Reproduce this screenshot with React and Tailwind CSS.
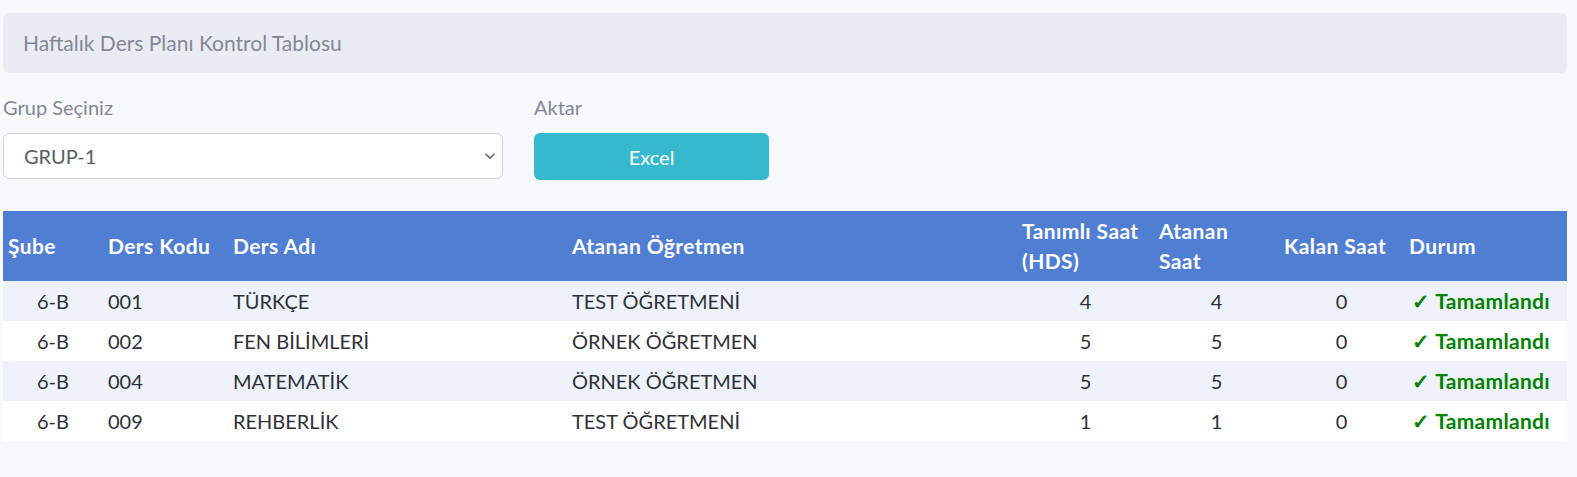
import React from 'react';

const rows = [
    { sube: '6-B', kod: '001', ad: 'TÜRKÇE', ogretmen: 'TEST ÖĞRETMENİ', tanimli: 4, atanan: 4, kalan: 0 },
    { sube: '6-B', kod: '002', ad: 'FEN BİLİMLERİ', ogretmen: 'ÖRNEK ÖĞRETMEN', tanimli: 5, atanan: 5, kalan: 0 },
    { sube: '6-B', kod: '004', ad: 'MATEMATİK', ogretmen: 'ÖRNEK ÖĞRETMEN', tanimli: 5, atanan: 5, kalan: 0 },
    { sube: '6-B', kod: '009', ad: 'REHBERLİK', ogretmen: 'TEST ÖĞRETMENİ', tanimli: 1, atanan: 1, kalan: 0 },
];

const th = 'px-[5px] py-[5px] text-left font-bold text-[21px] tracking-[0.4px]';

export default function App() {
    return (
        <div className="min-h-screen bg-[#f8f9fc] pt-[13px] pl-[3px] pr-[10px] text-[20px] leading-[30px]" style={{ fontFamily: 'Lato, "Noto Sans", sans-serif' }}>
            {/* Title */}
            <div className="h-[60px] rounded-md bg-[#eaecf4] px-5 flex items-center text-[#858796] text-[21px]">
                Haftalık Ders Planı Kontrol Tablosu
            </div>

            {/* Filters */}
            <div className="flex gap-[31px] mt-[19px]">
                <div className="w-[500px]">
                    <label className="block text-[#858796] mb-[11px]">Grup Seçiniz</label>
                    <div className="relative">
                        <select className="w-full h-[46px] appearance-none rounded-md border border-[#d1d3e2] bg-white pl-5 pr-10 text-[#5a5c69] outline-none">
                            <option>GRUP-1</option>
                        </select>
                        <svg className="absolute right-[6px] top-1/2 -translate-y-1/2 w-[14px] h-[14px] pointer-events-none" viewBox="0 0 16 16" fill="none" stroke="#6e707e" strokeWidth="2" strokeLinecap="round" strokeLinejoin="round">
                            <path d="M3.5 6l4.5 4.5L12.5 6" />
                        </svg>
                    </div>
                </div>
                <div className="w-[235px]">
                    <label className="block text-[#858796] mb-[11px]">Aktar</label>
                    <button className="w-full h-[47px] rounded-md bg-[#36b9cc] text-white">
                        Excel
                    </button>
                </div>
            </div>

            {/* Table */}
            <table className="w-full table-fixed border-collapse mt-[31px] text-[#2f3038]">
                <colgroup>
                    <col className="w-[100px]" />
                    <col className="w-[125px]" />
                    <col className="w-[339px]" />
                    <col className="w-[450px]" />
                    <col className="w-[137px]" />
                    <col className="w-[125px]" />
                    <col className="w-[125px]" />
                    <col />
                </colgroup>
                <thead>
                    <tr className="bg-[#507ed3] text-white h-[70px]">
                        <th className={th}>Şube</th>
                        <th className={th}>Ders Kodu</th>
                        <th className={th}>Ders Adı</th>
                        <th className={th}>Atanan Öğretmen</th>
                        <th className={th}>Tanımlı Saat (HDS)</th>
                        <th className={th}>Atanan<br />Saat</th>
                        <th className={th}>Kalan Saat</th>
                        <th className={th}>Durum</th>
                    </tr>
                </thead>
                <tbody>
                    {rows.map((r, i) => (
                        <tr key={r.kod} className={i % 2 === 0 ? 'bg-[#eef3fb]' : 'bg-white'}>
                            <td className="px-[5px] py-[5px] text-center">{r.sube}</td>
                            <td className="px-[5px] py-[5px]">{r.kod}</td>
                            <td className="px-[5px] py-[5px]">{r.ad}</td>
                            <td className="px-[5px] py-[5px]">{r.ogretmen}</td>
                            <td className="px-[5px] py-[5px] text-center">{r.tanimli}</td>
                            <td className="px-[5px] py-[5px] text-center">{r.atanan}</td>
                            <td className="px-[5px] py-[5px] text-center">{r.kalan}</td>
                            <td className="pl-[5px] pr-[14px] py-[5px] text-center font-bold text-[21px] tracking-[0.3px] text-[#008000]">✓ Tamamlandı</td>
                        </tr>
                    ))}
                </tbody>
            </table>
        </div>
    );
}
